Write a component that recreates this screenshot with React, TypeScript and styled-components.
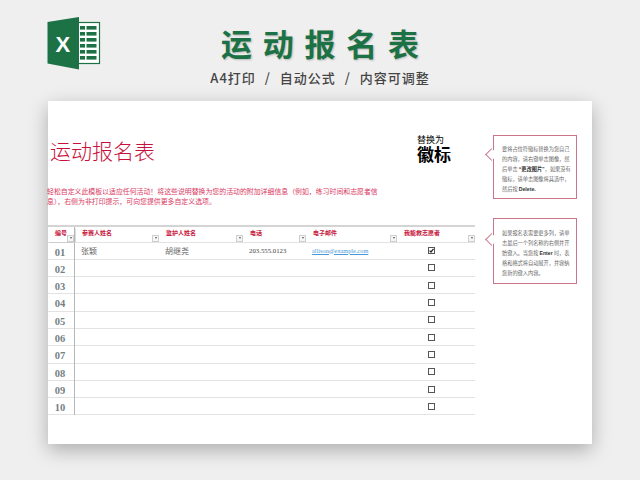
import styled, { createGlobalStyle } from "styled-components";

const cjkSans = `"Noto Sans CJK SC", "Liberation Sans", sans-serif`;
const cjkSerif = `"Liberation Serif", "Noto Sans CJK SC", serif`;

const GlobalStyle = createGlobalStyle`
  html, body {
    margin: 0;
    padding: 0;
    background: #efefef;
  }
`;

const Page = styled.div`
  width: 640px;
  height: 480px;
  overflow: hidden;
  background: #efefef;
`;

const Banner = styled.header`
  display: grid;
  grid-template-columns: 1fr auto 1fr;
  height: 101px;
  padding-left: 47px;
  box-sizing: border-box;
`;

const Logo = styled.svg`
  margin-top: 17px;
  width: 54px;
  height: 53px;
`;

const Heading = styled.div`
  display: flex;
  flex-direction: column;
  align-items: center;
  margin-left: -47px;
  font-family: ${cjkSans};
`;

const BigTitle = styled.h1`
  margin: 22px -10.7px 0 0;
  font-size: 31px;
  line-height: 42px;
  font-weight: 700;
  letter-spacing: 10.7px;
  color: #1d7245;
  text-shadow: 1px 1px 2px rgba(0, 0, 0, 0.22);
`;

const SubTitle = styled.div`
  margin-top: 5px;
  font-size: 13px;
  line-height: 18px;
  font-weight: 500;
  letter-spacing: 1px;
  word-spacing: 5px;
  color: #444;
  white-space: pre;
`;

const Sheet = styled.main`
  display: flex;
  width: 544px;
  height: 343px;
  margin-left: 48px;
  background: #fff;
  box-shadow: 0 6px 18px rgba(0, 0, 0, 0.28);
`;

const Main = styled.div`
  width: 427px;
  display: flex;
  flex-direction: column;
`;

const TopRow = styled.div`
  display: flex;
  justify-content: space-between;
  height: 85px;
  padding: 33px 24px 0 2px;
  box-sizing: border-box;
`;

const SheetTitle = styled.h2`
  margin: 0;
  padding-top: 2px;
  font-family: ${cjkSans};
  font-size: 21px;
  line-height: 28px;
  font-weight: 300;
  color: #c8103c;
`;

const LogoHolder = styled.div`
  display: flex;
  flex-direction: column;
  font-family: ${cjkSans};
  color: #000;
`;

const HolderSmall = styled.span`
  font-size: 9px;
  line-height: 11px;
`;

const HolderBig = styled.span`
  font-size: 17px;
  line-height: 17px;
  font-weight: 700;
`;

const Description = styled.p`
  margin: 0 0 0 -1px;
  height: 39px;
  width: 333px;
  font-family: ${cjkSans};
  font-size: 6.9px;
  line-height: 10px;
  color: #d9385f;
`;

const Table = styled.div`
  border-top: 2px solid #d4d4d4;
`;

const Row = styled.div`
  display: grid;
  grid-template-columns: 27px 84px 84px 63px 91px 78px;
  grid-template-rows: minmax(0, 1fr);
  height: 17.3px;
  box-sizing: border-box;
  border-bottom: 1px solid #e2e3e2;
`;

const HeaderRow = styled(Row)`
  height: 15.5px;
`;

const HeaderCell = styled.div<{ $first?: boolean }>`
  position: relative;
  padding: 2px 0 0 7px;
  font-family: ${cjkSerif};
  font-size: 6px;
  line-height: 9px;
  font-weight: 700;
  color: #c8143c;
  border-right: ${(p) => (p.$first ? "1px solid #b4b8b8" : "none")};
  box-shadow: ${(p) => (p.$first ? "1px 1px 0 -0.5px #b4b8b8" : "none")};
`;

const Filter = styled.span`
  position: absolute;
  right: 0;
  bottom: 0;
  width: 7px;
  height: 7px;
  box-sizing: border-box;
  border: 1px solid #cfcfcf;
  background: #f6f6f6;
  display: flex;
  align-items: center;
  justify-content: center;
  &::after {
    content: "";
    border-left: 1.5px solid transparent;
    border-right: 1.5px solid transparent;
    border-top: 2px solid #555;
  }
`;

const NumberCell = styled.div`
  position: relative;
  font-family: ${cjkSerif};
  font-size: 10.5px;
  line-height: 20px;
  font-weight: 700;
  color: #737f84;
  text-align: center;
  padding-right: 2px;
  border-right: 1px solid #b4b8b8;
  &::after {
    content: "";
    position: absolute;
    right: -1px;
    bottom: -1px;
    width: 1px;
    height: 1px;
    background: #b4b8b8;
  }
`;

const Cell = styled.div`
  padding-left: 6px;
  font-family: ${cjkSans};
  font-size: 8px;
  line-height: 15px;
  color: #666;
`;

const PhoneCell = styled(Cell)`
  font-family: ${cjkSerif};
  font-size: 6.8px;
  color: #444;
`;

const EmailCell = styled(Cell)`
  font-family: ${cjkSerif};
  font-size: 6.3px;
  color: #4d98d8;
  text-decoration: underline;
`;

const CheckCell = styled.div`
  display: flex;
  align-items: center;
  justify-content: center;
  padding-right: 9px;
`;

const Box = styled.svg`
  width: 7px;
  height: 7px;
`;

const Notes = styled.aside`
  display: flex;
  flex-direction: column;
  gap: 19px;
  margin: 34px 0 0 18px;
`;

const Note = styled.div<{ $height: number; $tip: number; $top: number }>`
  position: relative;
  width: 84px;
  height: ${(p) => p.$height}px;
  box-sizing: border-box;
  padding: ${(p) => p.$top}px 4px 0 8px;
  border: 1px solid #c9758a;
  background: #fff;
  font-family: ${cjkSans};
  font-size: 5.2px;
  line-height: 9.8px;
  color: #666;
  &::before {
    content: "";
    position: absolute;
    left: -7px;
    top: ${(p) => p.$tip}px;
    width: 9px;
    height: 9px;
    box-sizing: border-box;
    background: #fff;
    border-left: 1px solid #c9758a;
    border-bottom: 1px solid #c9758a;
    transform: rotate(45deg);
  }
  b {
    color: #333;
    font-family: "Liberation Sans", ${cjkSans};
  }
`;

const heads = ["编号", "参赛人姓名", "监护人姓名", "电话", "电子邮件", "我能救志愿者"];
const numbers = ["01", "02", "03", "04", "05", "06", "07", "08", "09", "10"];

const ExcelLogo = () => (
  <Logo viewBox="0 0 54 53">
    <rect x="30" y="5.5" width="22.5" height="41" fill="#fff" stroke="#1d7245" strokeWidth="1.2" />
    {[9, 15, 21, 27, 33, 39].map((y) => (
      <g key={y}>
        <rect x="33" y={y} width="5" height="3.6" fill="#1d7245" />
        <rect x="39.5" y={y} width="10" height="3.6" fill="#1d7245" />
      </g>
    ))}
    <polygon points="0.5,5 32,0 32,52.5 0.5,46.5" fill="#1d7245" />
    <text x="8.5" y="35" fontFamily="Liberation Sans" fontWeight="700" fontSize="22" fill="#fff">
      X
    </text>
  </Logo>
);

const CheckBox = ({ checked }: { checked: boolean }) => (
  <Box viewBox="0 0 7 7">
    <rect x="0.5" y="0.5" width="6" height="6" fill="#fff" stroke="#555" />
    {checked && <path d="M1.6 3.6 L3 5 L5.5 1.9" fill="none" stroke="#222" strokeWidth="1.2" />}
  </Box>
);

export default function App() {
  return (
    <Page>
      <GlobalStyle />
      <Banner>
        <ExcelLogo />
        <Heading>
          <BigTitle>运动报名表</BigTitle>
          <SubTitle>{"A4打印 / 自动公式 / 内容可调整"}</SubTitle>
        </Heading>
      </Banner>
      <Sheet>
        <Main>
          <TopRow>
            <SheetTitle>运动报名表</SheetTitle>
            <LogoHolder>
              <HolderSmall>替换为</HolderSmall>
              <HolderBig>徽标</HolderBig>
            </LogoHolder>
          </TopRow>
          <Description>
            轻松自定义此模板以适应任何活动！将这些说明替换为您的活动的附加详细信息（例如，练习时间和志愿者信息），右侧为非打印提示，可向您提供更多自定义选项。
          </Description>
          <Table>
            <HeaderRow>
              {heads.map((h, i) => (
                <HeaderCell key={h} $first={i === 0}>
                  {h}
                  <Filter />
                </HeaderCell>
              ))}
            </HeaderRow>
            {numbers.map((n, i) => (
              <Row key={n}>
                <NumberCell>{n}</NumberCell>
                <Cell>{i === 0 && "张颖"}</Cell>
                <Cell>{i === 0 && "胡继尧"}</Cell>
                <PhoneCell>{i === 0 && "203.555.0123"}</PhoneCell>
                <EmailCell>{i === 0 && "allison@example.com"}</EmailCell>
                <CheckCell>
                  <CheckBox checked={i === 0} />
                </CheckCell>
              </Row>
            ))}
          </Table>
        </Main>
        <Notes>
          <Note $height={64} $tip={13.5} $top={8}>
            要将占位符徽标替换为您自己的内容，请右键单击图像，然后单击 <b>“更改图片”</b>，如果没有徽标，请单击图像将其选中，然后按 <b>Delete.</b>
          </Note>
          <Note $height={66} $tip={15.5} $top={9}>
            如果报名表需要更多列，请单击最后一个列名称的右侧并开始键入。当您按 <b>Enter</b> 时，表格和格式将自动展开，并容纳您新的键入内容。
          </Note>
        </Notes>
      </Sheet>
    </Page>
  );
}
